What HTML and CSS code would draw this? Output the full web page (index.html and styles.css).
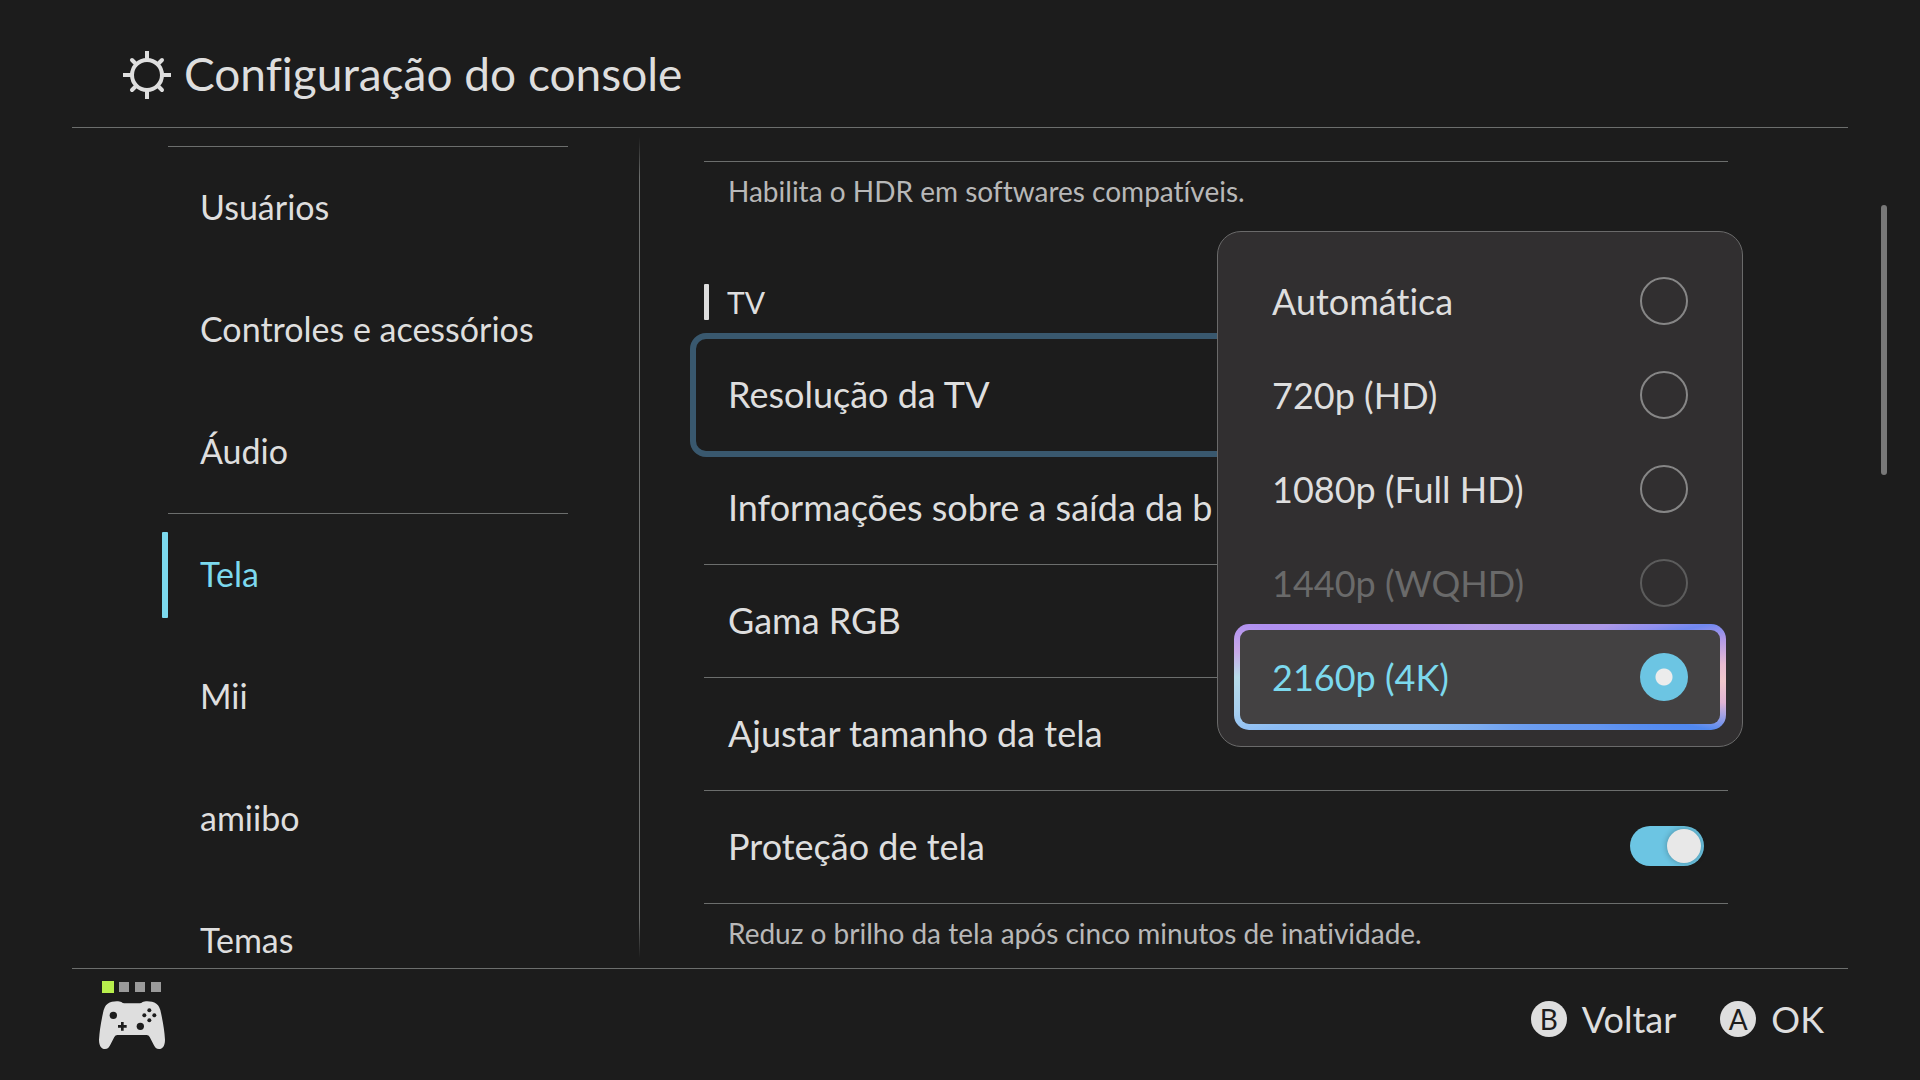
FILE: index.html
```html
<!DOCTYPE html>
<html lang="pt-BR">
<head>
  <meta charset="UTF-8">
  <title>Configuração do console</title>
  <link rel="stylesheet" href="styles.css">
</head>
<body>
  <header class="header">
    <svg class="gear" viewBox="0 0 48 48" fill="none" stroke="currentColor" stroke-width="4">
      <circle cx="24" cy="24" r="15"/>
      <path d="M24 9V0M24 39v9M9 24H0M39 24h9"/>
      <path stroke-linecap="round" d="M13 13l-4-4M35 13l4-4M13 35l-4 4M35 35l4 4"/>
    </svg>
    <h1>Configuração do console</h1>
  </header>

  <div class="content">
    <nav class="sidebar">
      <div class="group">
        <a href="#">Usuários</a>
        <a href="#">Controles e acessórios</a>
        <a href="#">Áudio</a>
      </div>
      <div class="group">
        <a href="#" class="active">Tela</a>
        <a href="#">Mii</a>
        <a href="#">amiibo</a>
        <a href="#">Temas</a>
      </div>
    </nav>

    <div class="divider"></div>

    <main class="settings">
      <p class="note">Habilita o HDR em softwares compatíveis.</p>
      <h2>TV</h2>

      <div class="dropdown">
        <button type="button" class="row focused">Resolução da TV</button>
        <div class="menu">
          <label class="option">Automática <input type="radio" name="resolution"></label>
          <label class="option">720p (HD) <input type="radio" name="resolution"></label>
          <label class="option">1080p (Full HD) <input type="radio" name="resolution"></label>
          <label class="option disabled">1440p (WQHD) <input type="radio" name="resolution" disabled></label>
          <label class="option selected">2160p (4K) <input type="radio" name="resolution" checked></label>
        </div>
      </div>

      <button type="button" class="row">Informações sobre a saída da b</button>
      <button type="button" class="row">Gama RGB</button>
      <button type="button" class="row">Ajustar tamanho da tela</button>
      <label class="row">Proteção de tela <input type="checkbox" class="switch" checked></label>
      <p class="note">Reduz o brilho da tela após cinco minutos de inatividade.</p>
    </main>

    <div class="scrollbar"></div>
  </div>

  <footer class="footer">
    <div class="player">
      <div class="leds">
        <span class="on"></span><span></span><span></span><span></span>
      </div>
      <svg class="pad" viewBox="0 0 198 144">
        <path fill="#dedede" d="M26 8C38 -1 60 -1 67 3Q71 7 76 7H122Q127 7 131 3C138 -1 160 -1 172 8Q183 16 186 36Q196 82 198 116C198 138 188 144 180 144C172 144 168 139 164 131L152 108Q149 102 143 102H55Q49 102 46 108L34 131C30 139 26 144 18 144C10 144 0 138 0 116Q2 82 12 36Q15 16 26 8Z"/>
        <g fill="#1c1c1c">
          <circle cx="43" cy="43" r="11"/>
          <circle cx="124" cy="76" r="11"/>
          <circle cx="151" cy="28" r="6"/>
          <circle cx="136" cy="43" r="6"/>
          <circle cx="166" cy="43" r="6"/>
          <circle cx="151" cy="58" r="6"/>
          <path d="M66 63h8v9h9v8h-9v9h-8v-9h-9v-8h9z"/>
        </g>
      </svg>
    </div>
    <div class="hints">
      <button type="button"><span class="key">B</span>Voltar</button>
      <button type="button"><span class="key">A</span>OK</button>
    </div>
  </footer>
</body>
</html>
```
FILE: styles.css
```css
* {
  box-sizing: border-box;
}
body {
  margin: 0;
  height: 100vh;
  display: flex;
  flex-direction: column;
  background: #1c1c1c;
  color: #dedede;
  font-family: Lato, "Noto Sans", sans-serif;
  font-size: 36px;
  font-variant-ligatures: none;
  overflow: hidden;
}
button {
  font: inherit;
  font-variant-ligatures: none;
  color: inherit;
  background: none;
  border: none;
  padding: 0;
  cursor: pointer;
}
a {
  color: inherit;
  text-decoration: none;
}

/* header */
.header {
  display: flex;
  align-items: center;
  gap: 13px;
  height: 128px;
  margin: 0 72px;
  padding: 22px 51px 0;
  border-bottom: 1px solid #6c6e6d;
}
.gear {
  width: 48px;
  height: 48px;
}
h1 {
  margin: 0;
  padding-bottom: 2px;
  font-size: 46px;
  font-weight: 400;
}

.content {
  flex: 1;
  min-height: 0;
  display: flex;
  position: relative;
  padding: 0 192px 0 168px;
  overflow: hidden;
}

/* sidebar */
.sidebar {
  width: 400px;
  padding-top: 18px;
  font-size: 34px;
}
.group {
  border-top: 1px solid #6c6e6d;
}
.sidebar a {
  display: flex;
  align-items: center;
  position: relative;
  height: 122px;
  padding: 0 0 4px 32px;
}
.sidebar .active {
  color: #7cd9ee;
}
.sidebar .active::before {
  content: "";
  position: absolute;
  left: -6px;
  top: 18px;
  bottom: 18px;
  width: 6px;
  border-radius: 1px;
  background: #7cd9ee;
}
.divider {
  width: 1px;
  margin: 9px 64px 10px 71px;
  background: linear-gradient(transparent, #6c6e6d 40px, #6c6e6d calc(100% - 40px), transparent);
}

/* settings list */
.settings {
  flex: 1;
  padding-top: 33px;
}
.note {
  margin: 0;
  padding: 0 24px 2px;
  border-top: 1px solid #6c6e6d;
  font-size: 28px;
  line-height: 58px;
  color: #b8b8b8;
}
.row + .note {
  border-top: none;
}
h2 {
  display: flex;
  align-items: center;
  gap: 18px;
  height: 36px;
  margin: 62px 0 18px;
  font-size: 30px;
  font-weight: 400;
  line-height: 32px;
}
h2::before {
  content: "";
  width: 5px;
  height: 36px;
  border-radius: 1px;
  background: #dedede;
}
.row {
  display: flex;
  justify-content: space-between;
  align-items: center;
  width: 100%;
  height: 113px;
  padding: 0 24px 2px;
  border-bottom: 1px solid #6c6e6d;
}
.dropdown {
  position: relative;
  margin: 0 -14px;
}
.row.focused {
  height: 124px;
  margin: -5px 0;
  padding: 0 32px 2px;
  border: 6px solid #39586e;
  border-radius: 16px;
}

/* resolution menu */
.menu {
  position: absolute;
  top: -102px;
  right: -1px;
  width: 526px;
  padding: 22px 16px;
  background: #312f30;
  border: 1px solid #6a6a6a;
  border-radius: 24px;
}
.option {
  display: flex;
  justify-content: space-between;
  align-items: center;
  height: 94px;
  padding: 0 38px;
}
.option.disabled {
  color: #6a6a6a;
}
.option.selected {
  height: 106px;
  margin: -6px 0;
  padding: 0 32px;
  color: #7cd9ee;
  border: 6px solid transparent;
  border-radius: 15px;
  background:
    linear-gradient(#434142, #434142) padding-box,
    conic-gradient(#b49ae6, #ac98e8 68deg, #9090ee 74deg, #7088f0 77deg, #b098e8 81deg, #e8bcd2 87deg, #f0c8cc 91deg, #e0b4d4 96deg, #8f9ce8 100deg, #5088f0 103deg, #6496f0 113deg, #7cacf0 180deg, #8cbcf4 256deg, #a8d0f0 262deg, #b8dcea 270deg, #c8a8e8 276deg, #b090f0 283deg, #b49ae6) border-box;
}
.option input {
  appearance: none;
  width: 48px;
  height: 48px;
  margin: 0;
  border: 2px solid #868686;
  border-radius: 50%;
}
.option input:disabled {
  border-color: #5c5c5c;
}
.option input:checked {
  border: none;
  background: radial-gradient(circle, #ececec 8px, #6cc5e3 9px);
}

.switch {
  appearance: none;
  display: flex;
  align-items: center;
  justify-content: flex-end;
  width: 74px;
  height: 40px;
  margin: 0;
  padding: 3px;
  border-radius: 20px;
  background: #6cc5e3;
}
.switch::before {
  content: "";
  width: 34px;
  height: 34px;
  border-radius: 50%;
  background: #e8e8e8;
  box-shadow: 0 0 6px rgba(0,0,0,0.3);
}

.scrollbar {
  position: absolute;
  top: 77px;
  right: 33px;
  width: 6px;
  height: 270px;
  border-radius: 3px;
  background: #787878;
}

/* footer */
.footer {
  display: flex;
  justify-content: space-between;
  height: 112px;
  margin: 0 72px;
  padding: 12px 24px 0 27px;
  border-top: 1px solid #6c6e6d;
}
.leds {
  display: flex;
  align-items: center;
  gap: 6px;
  height: 12px;
  padding-left: 3px;
}
.leds span {
  width: 10px;
  height: 10px;
  background: #9a9a9a;
}
.leds .on {
  width: 12px;
  height: 12px;
  margin-right: -1px;
  background: #b8ee4c;
}
.pad {
  display: block;
  width: 66px;
  height: 48px;
  margin-top: 8px;
}
.hints {
  display: flex;
  align-items: center;
  gap: 44px;
  height: 76px;
}
.hints button {
  display: flex;
  align-items: center;
  gap: 15px;
}
.key {
  width: 36px;
  height: 36px;
  border-radius: 50%;
  background: #dedede;
  color: #1c1c1c;
  font-size: 28px;
  line-height: 36px;
}
```
